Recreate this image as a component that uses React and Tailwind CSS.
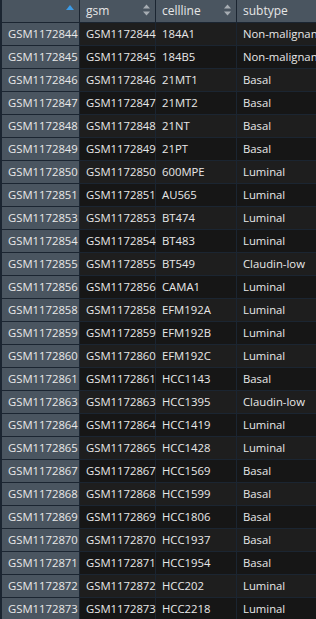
const rows = [
  ["GSM1172844", "184A1", "Non-malignant"],
  ["GSM1172845", "184B5", "Non-malignant"],
  ["GSM1172846", "21MT1", "Basal"],
  ["GSM1172847", "21MT2", "Basal"],
  ["GSM1172848", "21NT", "Basal"],
  ["GSM1172849", "21PT", "Basal"],
  ["GSM1172850", "600MPE", "Luminal"],
  ["GSM1172851", "AU565", "Luminal"],
  ["GSM1172853", "BT474", "Luminal"],
  ["GSM1172854", "BT483", "Luminal"],
  ["GSM1172855", "BT549", "Claudin-low"],
  ["GSM1172856", "CAMA1", "Luminal"],
  ["GSM1172858", "EFM192A", "Luminal"],
  ["GSM1172859", "EFM192B", "Luminal"],
  ["GSM1172860", "EFM192C", "Luminal"],
  ["GSM1172861", "HCC1143", "Basal"],
  ["GSM1172863", "HCC1395", "Claudin-low"],
  ["GSM1172864", "HCC1419", "Luminal"],
  ["GSM1172865", "HCC1428", "Luminal"],
  ["GSM1172867", "HCC1569", "Basal"],
  ["GSM1172868", "HCC1599", "Basal"],
  ["GSM1172869", "HCC1806", "Basal"],
  ["GSM1172870", "HCC1937", "Basal"],
  ["GSM1172871", "HCC1954", "Basal"],
  ["GSM1172872", "HCC202", "Luminal"],
  ["GSM1172873", "HCC2218", "Luminal"],
];

function SortIcon({ active }) {
  if (active) {
    return (
      <svg width="8" height="5" viewBox="0 0 8 5" className="absolute right-[5px] top-[5px]">
        <path d="M0 5 L4 0 L8 5 Z" fill="#3c9be6" />
      </svg>
    );
  }
  return (
    <svg width="7" height="12" viewBox="0 0 7 12" className="absolute right-[5px] top-[4px]">
      <path d="M0 4.5 L3.5 0.5 L7 4.5 Z" fill="#a7adb3" />
      <path d="M0 7.5 L3.5 11.5 L7 7.5 Z" fill="#a7adb3" />
    </svg>
  );
}

const cols = "grid grid-cols-[80px_76px_81px_120px]";

export default function App() {
  return (
    <div
      className="w-[316px] h-[619px] overflow-hidden bg-[#1c1c1c] text-[11.3px] leading-none"
      style={{ fontFamily: '"Open Sans", "Noto Sans", sans-serif' }}
    >
      <div className={`${cols} h-[23px] border-b border-[#1b2531]`}>
        <div className="relative bg-[#4a5560] border-l-2 border-r border-[#1b2531]">
          <SortIcon active />
        </div>
        <div className="relative bg-[#4a5560] border-r border-[#1b2531] flex items-center pl-[6px] text-[12px] text-[#e6e6e6]">
          gsm
          <SortIcon />
        </div>
        <div className="relative bg-[#4a5560] border-r border-[#1b2531] flex items-center pl-[6px] text-[12px] text-[#e6e6e6]">
          cellline
          <SortIcon />
        </div>
        <div className="relative bg-[#4a5560] flex items-center pl-[6px] text-[12px] text-[#e6e6e6]">
          subtype
          <SortIcon />
        </div>
      </div>
      {rows.map(([gsm, cell, sub], i) => (
        <div key={gsm} className={`${cols} h-[23px] border-b border-[#1b2531]`}>
          <div className="bg-[#4a5560] border-l-2 border-r border-[#1b2531] flex items-center pl-[6px] text-[#e8e8e8] whitespace-nowrap">
            {gsm}
          </div>
          <div
            className={`${i % 2 === 0 ? "bg-[#1e1e1e]" : "bg-[#161616]"} border-r border-[#1b2531] flex items-center pl-[6px] text-[#e8e8e8] whitespace-nowrap`}
          >
            {gsm}
          </div>
          <div
            className={`${i % 2 === 0 ? "bg-[#1e1e1e]" : "bg-[#161616]"} border-r border-[#1b2531] flex items-center pl-[6px] text-[#e8e8e8] whitespace-nowrap`}
          >
            {cell}
          </div>
          <div
            className={`${i % 2 === 0 ? "bg-[#1e1e1e]" : "bg-[#161616]"} flex items-center pl-[6px] text-[#e8e8e8] whitespace-nowrap`}
          >
            {sub}
          </div>
        </div>
      ))}
    </div>
  );
}
